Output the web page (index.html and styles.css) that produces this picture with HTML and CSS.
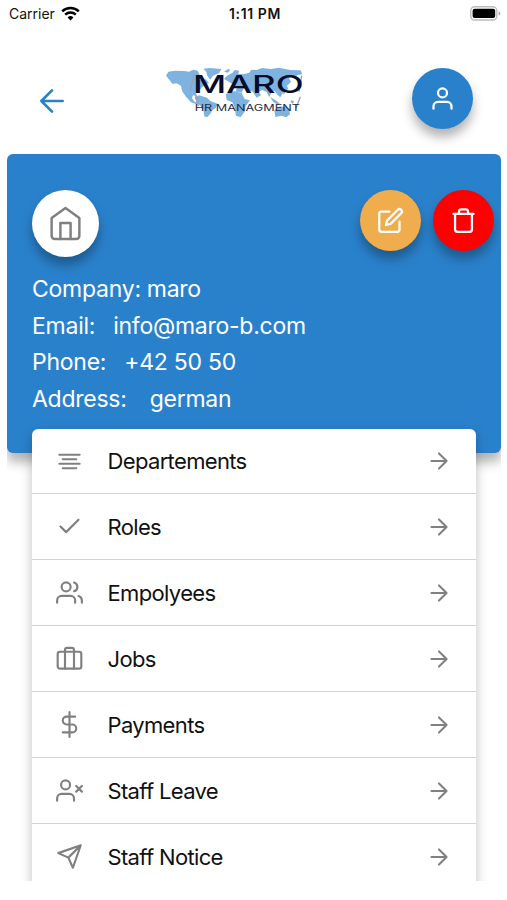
FILE: index.html
```html
<!DOCTYPE html>
<html lang="en">
<head>
    <meta charset="UTF-8">
    <meta name="viewport" content="width=device-width, initial-scale=1.0">
    <title>Maro HR Managment</title>
    <link rel="stylesheet" href="styles.css">
</head>
<body>
    <div class="screen">
        <div class="status-bar">
            <div class="carrier">
                <span>Carrier</span>
                <svg width="19" height="15" viewBox="0 0 19 15" fill="none" stroke="#000" stroke-width="2.5">
                    <path d="M1.2 5.4a12 12 0 0 1 16.6 0"/>
                    <path d="M4.2 8.7a7.7 7.7 0 0 1 10.6 0"/>
                    <path d="M9.5 14.5l-2.9-3a4.2 4.2 0 0 1 5.8 0z" fill="#000" stroke="none"/>
                </svg>
            </div>
            <span class="time">1:11 PM</span>
            <svg class="battery" width="31" height="15" viewBox="0 0 31 15">
                <rect x="0.8" y="0.8" width="26" height="13.2" rx="3.8" fill="#fff" stroke="#bbb" stroke-width="1.4"/>
                <rect x="2.6" y="2.8" width="22.6" height="9.2" rx="2" fill="#000"/>
                <path d="M28.6 5.2c2.4 1 2.4 3.4 0 4.4z" fill="#aaa"/>
            </svg>
        </div>

        <div class="header">
            <svg class="icon back" viewBox="0 0 24 24"><path d="M20 12H4M12 20l-8-8 8-8"/></svg>
            <svg class="logo" viewBox="0 0 480 225">
                <g class="map">
                    <path d="M33 62l7-12 20-3 28 1 14 2 12-6 14 3 6 12-8 8 6 8 20-2 10 10-14 8-11 10-14 14 3 8-12-2-3 9 8 10 11 3-6 5-17-7-14-16-12-17-3-16-14-7-11 2z"/>
                    <path d="M145 41l20-2 34 3-6 12-19 8-8 12-9-11-3-13z"/>
                    <path d="M119 127l14-6 23 7 10 10 22 8-6 13-10 7-7 12-9 9-8-3-3-19-8-12-12-9z"/>
                    <path d="M207 72l9-10 16-8 7-9 13 2-2 10 15 1 18-5 6-9 16 1 16-6 27 3 23-4 35 7 31 1 5 12-15 2-9 12-4-7-13 2 7 14-12 11 4 10-15 9-9 16-9-8-8-11-8 1-8 18-8-16-14-6-9 6 6 10-13 7-13-19-10-1-9-10-8 4-5 11-18-2 4-15-12-8z"/>
                    <path d="M212 117l23-9 25 7 9 17 16 4-13 18-2 15-13 17-14-3-5-29-6-12-17-7z"/>
                    <path d="M345 126l15 8 15 13-4 4-16-10zM358 166l17-12 11 2 5-6 12 16 2 12-11 9-15-5-18 4z"/>
                    <path d="M207 50l12-8 7 2-7 9zM383 107l8-12 5 9-10 15zM409 136l8 3-3 7-8-5z"/>
                </g>
                <path class="scratch" d="M118 57l-12 48M122 120l8 33M440 62l-8 48M436 125l-13 35"/>
                <text class="logo-name" x="114" y="115" textLength="332" lengthAdjust="spacingAndGlyphs">MARO</text>
                <text class="logo-sub" x="119" y="168" textLength="316" lengthAdjust="spacingAndGlyphs">HR MANAGMENT</text>
            </svg>
            <div class="round-btn user">
                <svg class="icon" viewBox="0 0 24 24"><path d="M20 21v-2a4 4 0 0 0-4-4H8a4 4 0 0 0-4 4v2"/><circle cx="12" cy="7" r="4"/></svg>
            </div>
        </div>

        <div class="content">
            <div class="company-card">
                <div class="card-top">
                    <div class="round-btn home">
                        <svg class="icon" viewBox="0 0 24 24"><path d="M3 8.500l9-6.500 9 6.500V20a2 2 0 0 1-2 2H5a2 2 0 0 1-2-2z"/><path d="M8.700 22V11.700h6.600V22"/></svg>
                    </div>
                    <div class="actions">
                        <div class="round-btn edit">
                            <svg class="icon" viewBox="0 0 24 24"><path d="M11 4H4a2 2 0 0 0-2 2v14a2 2 0 0 0 2 2h14a2 2 0 0 0 2-2v-7"/><path d="M18.500 2.500a2.121 2.121 0 0 1 3 3L12 15l-4 1 1-4 9.500-9.500z"/></svg>
                        </div>
                        <div class="round-btn delete">
                            <svg class="icon" viewBox="0 0 24 24"><path d="M3 6h18M19.500 6v14a2 2 0 0 1-2 2h-11a2 2 0 0 1-2-2V6M8 6V4a2 2 0 0 1 2-2h4a2 2 0 0 1 2 2v2"/></svg>
                        </div>
                    </div>
                </div>
                <div class="info">
                    <p><span class="company">Company:</span><span>maro</span></p>
                    <p><span class="email">Email:</span><span>info@maro-b.com</span></p>
                    <p><span class="phone">Phone:</span><span>+42 50 50</span></p>
                    <p><span class="address">Address:</span><span>german</span></p>
                </div>
            </div>

            <div class="menu">
                <div class="menu-item">
                    <svg class="icon" viewBox="0 0 24 24"><path d="M18 10H6M21 6H3M21 14H3M18 18H6"/></svg>
                    <span>Departements</span>
                    <svg class="icon arrow" viewBox="0 0 24 24"><path d="M5 12h14M12 5l7 7-7 7"/></svg>
                </div>
                <div class="menu-item">
                    <svg class="icon" viewBox="0 0 24 24"><path d="M20 6L9 17l-5-5"/></svg>
                    <span>Roles</span>
                    <svg class="icon arrow" viewBox="0 0 24 24"><path d="M5 12h14M12 5l7 7-7 7"/></svg>
                </div>
                <div class="menu-item">
                    <svg class="icon" viewBox="0 0 24 24"><path d="M17 21v-2a4 4 0 0 0-4-4H5a4 4 0 0 0-4 4v2"/><circle cx="9" cy="7" r="4"/><path d="M23 21v-2a4 4 0 0 0-3-3.870M16 3.130a4 4 0 0 1 0 7.750"/></svg>
                    <span>Empolyees</span>
                    <svg class="icon arrow" viewBox="0 0 24 24"><path d="M5 12h14M12 5l7 7-7 7"/></svg>
                </div>
                <div class="menu-item">
                    <svg class="icon" viewBox="0 0 24 24"><rect x="1.500" y="6" width="21" height="15" rx="2"/><path d="M8 21V4.500a2 2 0 0 1 2-2h4a2 2 0 0 1 2 2V21"/></svg>
                    <span>Jobs</span>
                    <svg class="icon arrow" viewBox="0 0 24 24"><path d="M5 12h14M12 5l7 7-7 7"/></svg>
                </div>
                <div class="menu-item">
                    <svg class="icon" viewBox="0 0 24 24"><path d="M12 1v22M17 5H9.500a3.500 3.500 0 0 0 0 7h5a3.500 3.500 0 0 1 0 7H6"/></svg>
                    <span>Payments</span>
                    <svg class="icon arrow" viewBox="0 0 24 24"><path d="M5 12h14M12 5l7 7-7 7"/></svg>
                </div>
                <div class="menu-item">
                    <svg class="icon" viewBox="0 0 24 24"><path d="M16 21v-2a4 4 0 0 0-4-4H5a4 4 0 0 0-4 4v2"/><circle cx="8.500" cy="7" r="4"/><path d="M18 8l5 5M23 8l-5 5"/></svg>
                    <span>Staff Leave</span>
                    <svg class="icon arrow" viewBox="0 0 24 24"><path d="M5 12h14M12 5l7 7-7 7"/></svg>
                </div>
                <div class="menu-item">
                    <svg class="icon" viewBox="0 0 24 24"><path d="M22 2L11 13M22 2l-7 20-4-9-9-4z"/></svg>
                    <span>Staff Notice</span>
                    <svg class="icon arrow" viewBox="0 0 24 24"><path d="M5 12h14M12 5l7 7-7 7"/></svg>
                </div>
            </div>
        </div>
    </div>
</body>
</html>
```
FILE: styles.css
```css
* {
    box-sizing: border-box;
}
body {
    margin: 0;
    background: #fff;
    font-family: Inter, 'Liberation Sans', sans-serif;
    color: #111;
}
.screen {
    width: 507px;
    height: 881px;
    overflow: hidden;
}
.icon {
    display: block;
    fill: none;
    stroke: currentColor;
    stroke-width: 2;
    stroke-linecap: round;
    stroke-linejoin: round;
}
.status-bar {
    display: grid;
    grid-template-columns: 1fr auto 1fr;
    align-items: center;
    height: 28px;
    padding: 0 6px 2px 9px;
    font-size: 14px;
}
.carrier {
    display: flex;
    align-items: center;
    gap: 6px;
}
.time {
    font-weight: 600;
    letter-spacing: 0.6px;
}
.battery {
    justify-self: end;
}
.header {
    display: flex;
    justify-content: space-between;
    height: 126px;
    padding: 27px 34px 0 36px;
}
.back {
    width: 32px;
    height: 32px;
    margin-top: 30px;
    color: #2a81cb;
}
.logo {
    width: 160px;
    height: 75px;
    margin-right: 11px;
}
.map {
    fill: #7fb3df;
}
.scratch {
    fill: none;
    stroke: #98a1b5;
    stroke-width: 4;
}
.logo-name {
    fill: #050c2c;
    font-size: 74px;
    font-weight: 500;
}
.logo-sub {
    fill: #252b43;
    font-size: 27px;
    font-weight: 400;
}
.round-btn {
    display: flex;
    justify-content: center;
    align-items: center;
    width: 61px;
    height: 61px;
    border-radius: 50%;
    color: #fff;
    box-shadow: 0 8px 11px rgba(0, 0, 0, 0.3);
}
.round-btn .icon {
    width: 27px;
    height: 27px;
}
.user {
    margin-top: 13px;
    background: #2a81cb;
}
.content {
    height: 727px;
    margin: 0 6px 0 7px;
    overflow: hidden;
}
.company-card {
    height: 299px;
    padding: 36px 7px 0 25px;
    border-radius: 6px;
    background: #2a81cb;
    box-shadow: 0 9px 12px rgba(0, 0, 0, 0.3);
    color: #fff;
}
.card-top {
    display: flex;
    justify-content: space-between;
}
.actions {
    display: flex;
    gap: 12px;
}
.round-btn.home {
    width: 67px;
    height: 67px;
    background: #fff;
    color: #808080;
}
.home .icon {
    width: 37px;
    height: 37px;
    stroke-width: 1.6;
}
.edit {
    background: #efad4d;
}
.delete {
    background: #f00;
}
.info {
    margin-top: 14px;
    font-size: 23px;
    font-weight: 400;
    line-height: 36.6px;
    letter-spacing: -0.25px;
}
.info p {
    margin: 0;
    white-space: nowrap;
}
.info .company {
    margin-right: 6px;
}
.info .email,
.info .phone {
    margin-right: 18px;
}
.info .address {
    margin-right: 23px;
}
.menu {
    position: relative;
    width: 444px;
    margin: -24px 0 0 25px;
    border-radius: 6px;
    background: #fff;
    box-shadow: 0 5px 12px rgba(0, 0, 0, 0.26);
}
.menu-item {
    display: flex;
    align-items: center;
    height: 66px;
    padding: 0 24px;
    border-bottom: 1px solid #d2d2d2;
    font-size: 22px;
    letter-spacing: -0.65px;
}
.menu-item:first-child {
    height: 65px;
}
.menu-item .icon {
    width: 27px;
    height: 27px;
    color: #808080;
    stroke-width: 1.9;
}
.menu-item span {
    flex: 1;
    margin-left: 24.5px;
}
.menu-item .arrow {
    width: 26px;
    height: 26px;
}
```
